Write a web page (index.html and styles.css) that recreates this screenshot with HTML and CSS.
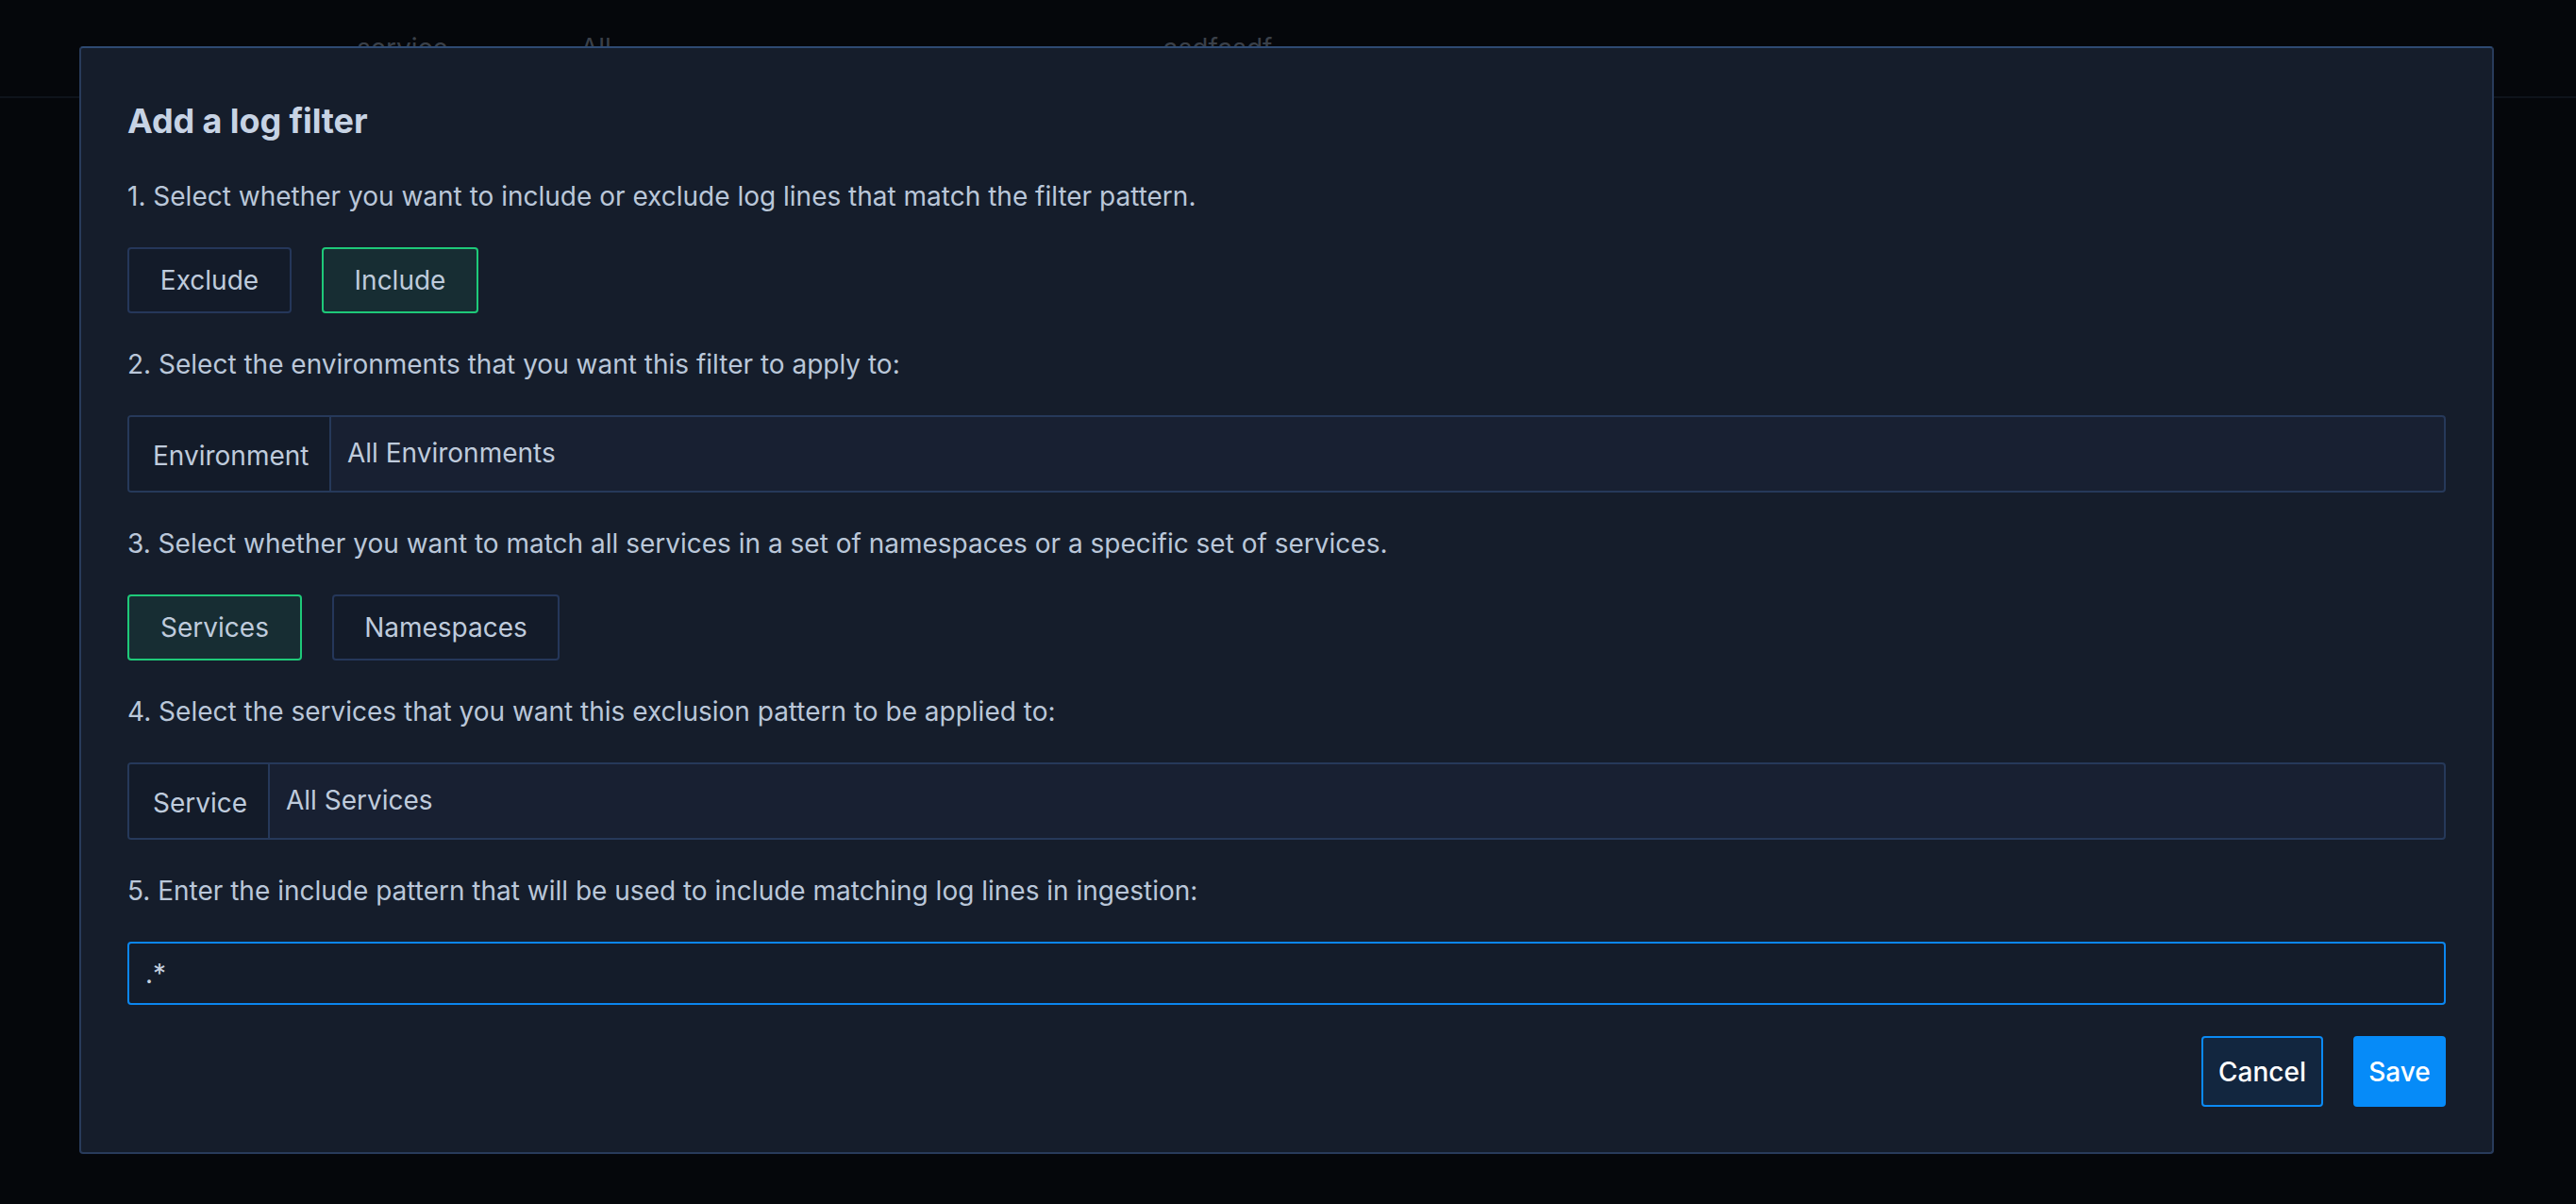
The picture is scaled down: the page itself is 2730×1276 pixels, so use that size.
FILE: index.html
```html
<!DOCTYPE html>
<html lang="en">
<head>
<meta charset="utf-8">
<title>Add a log filter</title>
<link rel="stylesheet" href="styles.css">
</head>
<body>
<div class="page">
  <div class="table-row">
    <span class="cell cell-service">service</span>
    <span class="cell cell-all">All</span>
    <span class="cell cell-pattern">asdfasdf</span>
  </div>
</div>

<div class="modal" role="dialog" aria-labelledby="modal-title">
  <h2 class="modal-title" id="modal-title">Add a log filter</h2>

  <p class="step">1. Select whether you want to include or exclude log lines that match the filter pattern.</p>
  <div class="choice-row">
    <button class="choice choice-exclude">Exclude</button>
    <button class="choice choice-include is-active">Include</button>
  </div>

  <p class="step">2. Select the environments that you want this filter to apply to:</p>
  <div class="select-box">
    <div class="select-label label-env">Environment</div>
    <div class="select-value">All Environments</div>
  </div>

  <p class="step">3. Select whether you want to match all services in a set of namespaces or a specific set of services.</p>
  <div class="choice-row">
    <button class="choice choice-services is-active">Services</button>
    <button class="choice choice-namespaces">Namespaces</button>
  </div>

  <p class="step">4. Select the services that you want this exclusion pattern to be applied to:</p>
  <div class="select-box">
    <div class="select-label label-svc">Service</div>
    <div class="select-value">All Services</div>
  </div>

  <p class="step">5. Enter the include pattern that will be used to include matching log lines in ingestion:</p>
  <div class="pattern-input">.*</div>

  <div class="modal-footer">
    <button class="btn btn-cancel">Cancel</button>
    <button class="btn btn-save">Save</button>
  </div>
</div>
</body>
</html>
```

FILE: styles.css
```css
html, body {
  margin: 0;
  padding: 0;
  background: #05070b;
  height: 100%;
  overflow: hidden;
}

body {
  font-family: Inter, "Noto Sans", "Liberation Sans", sans-serif;
  color: #bac7d9;
}

.page {
  height: 1276px;
}

.table-row {
  height: 104px;
  border-bottom: 2px solid #0e131b;
  display: flex;
  align-items: flex-start;
  padding-top: 33px;
  box-sizing: border-box;
}

.cell {
  font-size: 28px;
  line-height: 36px;
  color: #3a4049;
}

.cell-service { margin-left: 378px; }
.cell-all { margin-left: 140px; }
.cell-pattern { margin-left: 585px; }

.modal {
  position: absolute;
  top: 49px;
  left: 84px;
  width: 2559px;
  box-sizing: border-box;
  background: #151d2b;
  border: 2px solid #283b5b;
  border-top-color: #2e4a72;
  border-radius: 4px;
  padding: 51px 49px 48px 49px;
  display: flex;
  flex-direction: column;
  gap: 33px;
}

.modal-title {
  margin: 0;
  font-size: 36px;
  line-height: 52px;
  font-weight: 700;
  color: #c7d3e4;
  letter-spacing: -0.1px;
}

.step {
  margin: 0;
  font-size: 28px;
  line-height: 42px;
  color: #bac7d9;
}

.choice-row {
  display: flex;
  gap: 32px;
}

.choice {
  height: 70px;
  box-sizing: border-box;
  padding: 0;
  font-family: inherit;
  font-size: 28px;
  font-weight: 400;
  color: #bfcbdc;
  background: #131b29;
  border: 2px solid #25375a;
  border-radius: 4px;
}

.choice.is-active {
  background: #172d33;
  border-color: #1ec979;
}

.choice-services { width: 185px; }
.choice-namespaces { width: 241px; }
.choice-exclude { width: 174px; }
.choice-include { width: 166px; }

.select-box {
  height: 82px;
  box-sizing: border-box;
  display: flex;
  border: 2px solid #26395a;
  border-radius: 4px;
  background: #182032;
  overflow: hidden;
}

.select-label {
  display: flex;
  align-items: center;
  padding: 4px 25px 0 25px;
  font-size: 28px;
  font-weight: 400;
  color: #bfcbdc;
  background: #131b29;
  border-right: 2px solid #26395a;
}

.label-env { width: 214px; box-sizing: border-box; }
.label-svc { width: 149px; box-sizing: border-box; }

.select-value {
  display: flex;
  align-items: center;
  padding: 0 17px 2px 17px;
  font-size: 28px;
  color: #bfcbdc;
}

.pattern-input {
  height: 67px;
  box-sizing: border-box;
  display: flex;
  align-items: center;
  padding: 0 17px;
  font-size: 28px;
  color: #c3cfdf;
  background: #141c2a;
  border: 2px solid #0b86ef;
  border-radius: 4px;
}

.modal-footer {
  display: flex;
  justify-content: flex-end;
  gap: 32px;
}

.btn {
  height: 75px;
  box-sizing: border-box;
  font-family: inherit;
  font-size: 28px;
  font-weight: 500;
  color: #ffffff;
  border-radius: 4px;
}

.btn-cancel {
  width: 129px;
  background: #12263f;
  border: 2px solid #0b8af4;
}

.btn-save {
  width: 98px;
  background: #068bf8;
  border: 2px solid #068bf8;
}
```
